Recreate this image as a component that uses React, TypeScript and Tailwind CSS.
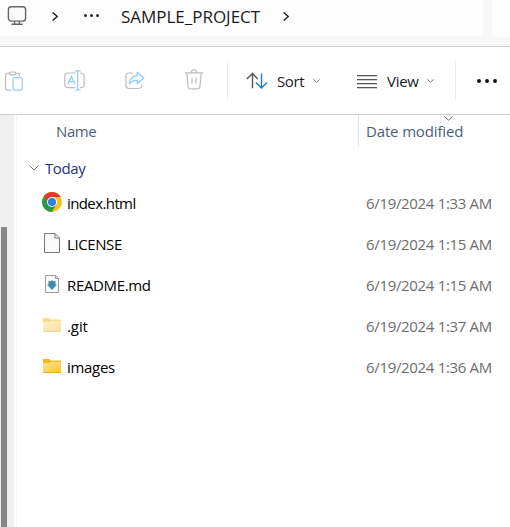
import React from 'react';

function Chevron({ className, down = false }: { className: string; down?: boolean }) {
  return (
    <svg className={className} viewBox={down ? '0 0 10 6' : '0 0 6 10'} fill="none" stroke="currentColor" preserveAspectRatio="none">
      <path d={down ? 'M.5 .5 5 5 9.5 .5' : 'M.7 .5 5.3 5 .7 9.5'} vectorEffect="non-scaling-stroke" />
    </svg>
  );
}

function Monitor() {
  return (
    <svg className="ml-[7px] h-[22px] w-5 shrink-0" viewBox="0 0 20 22" fill="none" stroke="#666" strokeWidth="1.4">
      <rect x="1.4" y="2.7" width="17.2" height="14.4" rx="2.8" fill="#fafafa" />
      <path d="M7.6 17.2v2.6M12.4 17.2v2.6M4.5 20.2h11.2" />
    </svg>
  );
}

function Paste() {
  return (
    <svg className="ml-1 h-5 w-[19px] shrink-0" viewBox="0 0 19 20" fill="none" strokeWidth="1.2">
      <path d="M5.5 2.4H3q-1.4 0-1.4 1.4v14q0 1.4 1.4 1.4h4.3M11.5 2.4H14q1.4 0 1.4 1.4v1.5" stroke="#bdbdbd" />
      <rect x="5.6" y="1" width="6" height="2.9" rx="1.2" stroke="#b5b5b5" />
      <rect x="9" y="6.7" width="9.3" height="12.5" rx="1.5" fill="#fbfdff" stroke="#9bcdf2" />
    </svg>
  );
}

function Rename() {
  return (
    <svg className="h-[21px] w-[21px] shrink-0" viewBox="0 0 21 21" fill="none" strokeWidth="1.2">
      <path d="M11.5 3H4Q.8 3 .8 6.2v8.2q0 3.2 3.2 3.2h7.5M16 3q4.2 0 4.2 3.2v8.2q0 3.2-4.2 3.2" stroke="#bdbdbd" />
      <path d="m3.7 14.2 3.7-8 3.7 8M5 11.6h4.8M13.7.8V20M10.8.8h5.8M10.8 20h5.8" stroke="#94c9f0" />
    </svg>
  );
}

function Share() {
  return (
    <svg className="h-5 w-5 shrink-0" viewBox="0 0 20 20" fill="none" strokeWidth="1.2" strokeLinejoin="round">
      <path d="M8.2 2H4Q1 2 1 5v9.5q0 3 3 3h9q3.8 0 3.8-3.8" stroke="#bdbdbd" />
      <path d="M12.2 1.2 18.8 7l-6.6 5.7V9.3Q7.5 9 4.4 12.8 5.2 5.3 12.2 4.6Z" stroke="#91c8f2" fill="#f7fbff" />
    </svg>
  );
}

function Trash() {
  return (
    <svg className="h-[21px] w-5 shrink-0" viewBox="0 0 20 21" fill="none" stroke="#c0c0c0" strokeWidth="1.3">
      <path d="M1 3.8h18M7.3 3.7q0-2.9 2.7-2.9t2.7 2.9M2.8 4l1.3 13.6q.2 2.2 2.3 2.2h7.2q2.1 0 2.3-2.2L17.2 4M8 8.5v6.2M12 8.5v6.2" />
    </svg>
  );
}

function SortArrows() {
  return (
    <svg className="h-[18px] w-[22px] shrink-0" viewBox="0 0 22 18" fill="none" strokeWidth="1.4">
      <path d="M6.5 16.2V1.5M.8 7l5.7-5.6L11.8 7" stroke="#555" />
      <path d="M15.5 1.5v14.7M9.9 10.6l5.6 5.5 5.5-5.5" stroke="#1b7dd0" />
    </svg>
  );
}

function ChromeLogo() {
  return (
    <svg className="h-5 w-5" viewBox="0 0 20 20">
      <circle cx="10" cy="10" r="10" fill="#fbc116" />
      <path d="M10 10 5.7 12.5 1.34 5A10 10 0 0 1 18.66 5H10Z" fill="#df3a2d" />
      <path d="M1.34 5A10 10 0 0 0 10 20l4.3-7.5H10Z" fill="#299b46" />
      <circle cx="10" cy="10" r="5" fill="#fff" />
      <circle cx="10" cy="10" r="4" fill="#2e7de9" />
    </svg>
  );
}

function PlainFile() {
  return (
    <svg className="h-5 w-4" viewBox="0 0 16 20" fill="#fafafa" stroke="#777" strokeWidth="1">
      <path d="M.5.5H11l4.5 4.5v14.5H.5ZM11 .5V5h4.5" />
    </svg>
  );
}

function MarkdownFile() {
  return (
    <svg className="h-[18px] w-[14px]" viewBox="0 0 14 18">
      <path d="M.5.5h10L13.5 3.5v14H.5ZM10.5.5v3h3" fill="#fafafa" stroke="#999" />
      <path d="M3.5 5.5 5.2 6.5 7 5.2l1.8 1.3 1.7-1v4H12l-5 5.6-5-5.6h1.5Z" fill="#4289aa" />
    </svg>
  );
}

function Folder({ faded = false }: { faded?: boolean }) {
  return (
    <svg className={`h-[14px] w-[18px] ${faded ? 'opacity-50' : ''}`} viewBox="0 0 18 14">
      <defs>
        <linearGradient id="folder" x1="0" y1="0" x2="1" y2="1">
          <stop stopColor="#ffe694" />
          <stop offset="1" stopColor="#fac33c" />
        </linearGradient>
      </defs>
      <path d="M0 .5Q0 0 .5 0H6l2 1.5h9.5q.5 0 .5.5v10H0Z" fill="#f4b61d" />
      <path d="M0 4h6l2-1.3h10v10.8H0Z" fill="url(#folder)" />
      <path d="M0 13h18v1H0Z" fill="#e7ac28" />
    </svg>
  );
}

const files = [
  { name: 'index.html', time: '6/19/2024 1:33 AM', icon: <ChromeLogo />, track: 'tracking-[-0.6px]', shift: 'pb-[1px]' },
  { name: 'LICENSE', time: '6/19/2024 1:15 AM', icon: <PlainFile />, track: 'tracking-[-0.4px]', shift: 'pb-[1px]' },
  { name: 'README.md', time: '6/19/2024 1:15 AM', icon: <MarkdownFile />, track: 'tracking-[-0.35px]', shift: 'pb-[1px]' },
  { name: '.git', time: '6/19/2024 1:37 AM', icon: <Folder faded />, track: 'tracking-[-0.1px]', shift: 'pb-[1px]' },
  { name: 'images', time: '6/19/2024 1:36 AM', icon: <Folder />, track: 'tracking-[-0.3px]', shift: 'pb-[1px]' },
];

export default function App() {
  return (
    <div className="flex h-[527px] w-[510px] flex-col overflow-hidden whitespace-nowrap bg-white font-['Open_Sans','Noto_Sans',sans-serif] text-[15px] leading-5 text-[#1b1b1b]">
      <header className="flex h-[47px] shrink-0 items-start border-b border-[#d1d1d1] bg-[#f7f7f7]">
        <div className="flex h-9 w-[483px] items-start rounded-br-[5px] bg-[#fdfdfd] pt-1">
          <Monitor />
          <Chevron className="ml-[25px] mt-[8px] h-[9px] w-[6px] stroke-[1.4]" />
          <div className="ml-[26px] mt-[10px] flex gap-[3px]">
            {[0, 1, 2].map((n) => <i key={n} className="h-[3px] w-[3px] rounded-full bg-[#292929]" />)}
          </div>
          <span className="ml-[22px] mt-[3px] w-[140px] text-[17px] tracking-[-0.02px]">SAMPLE_PROJECT</span>
          <Chevron className="ml-[22px] mt-[8px] h-[9px] w-[6px] stroke-[1.4]" />
        </div>
        <div className="ml-[9px] h-[37px] w-[18px] rounded-bl-[5px] bg-[#fdfdfd]" />
      </header>
      <div className="flex h-[68px] shrink-0 items-center border-b border-[#d1d1d1]">
        <Paste />
        <div className="ml-[41px] flex"><Rename /></div>
        <div className="ml-[40px] flex"><Share /></div>
        <div className="ml-[39px] flex pb-[2px]"><Trash /></div>
        <div className="ml-[23px] h-10 w-px bg-[#ececec]" />
        <div className="ml-[18px] flex w-[31px]"><SortArrows /></div>
        <span className="w-[28px] tracking-[-0.4px]">Sort</span>
        <Chevron down className="ml-[8px] h-[4px] w-[7px] text-[#777]" />
        <div className="ml-[37px] flex w-5 flex-col gap-[3px] pt-[1px]">
          {[0, 1, 2, 3].map((n) => <i key={n} className="h-px bg-[#555] shadow-[0_1px_0_#d0d0d0]" />)}
        </div>
        <span className="ml-[10px] w-8 tracking-[-0.3px]">View</span>
        <Chevron down className="ml-[8px] h-[4px] w-[7px] text-[#777]" />
        <div className="ml-[21px] h-10 w-px bg-[#ececec]" />
        <div className="ml-[21px] flex gap-1">
          {[0, 1, 2].map((n) => <i key={n} className="h-1 w-1 rounded-full bg-[#151515]" />)}
        </div>
      </div>
      <main className="flex flex-1">
        <aside className="w-[14px] bg-[#efefef] pl-px pt-[112px]">
          <div className="h-[300px] w-[6px] rounded-t-[1px] bg-[#868686]" />
        </aside>
        <section className="ml-[2px] flex-1 border-l border-[#f3f3f3]">
          <div className="flex h-8 text-[#4c607a]">
            <div className="w-[341px] pl-[39px] pt-[6px] tracking-[-0.4px]">Name</div>
            <div className="relative flex-1 border-l border-[#e3e3e3] pl-[7px] pt-[6px] tracking-[-0.15px]">
              Date modified
              <Chevron down className="absolute left-[85px] top-[1px] h-[5px] w-[9px] text-[#666]" />
            </div>
          </div>
          <div className="flex h-[35px] items-center pl-[12px] pt-[6px] text-[#1e3287]">
            <Chevron down className="mr-[6px] h-[6px] w-[10px] text-[#777]" />
            <span className="tracking-[-0.4px]">Today</span>
          </div>
          {files.map((file) => (
            <div key={file.name} className="flex h-[41px] items-center">
              <div className={`ml-[24px] flex w-[22px] justify-center ${file.shift}`}>{file.icon}</div>
              <span className={`ml-[4px] w-[299px] text-black ${file.track}`}>{file.name}</span>
              <span className="tracking-[-0.33px] text-[#6d6d6d]">{file.time}</span>
            </div>
          ))}
        </section>
      </main>
    </div>
  );
}
